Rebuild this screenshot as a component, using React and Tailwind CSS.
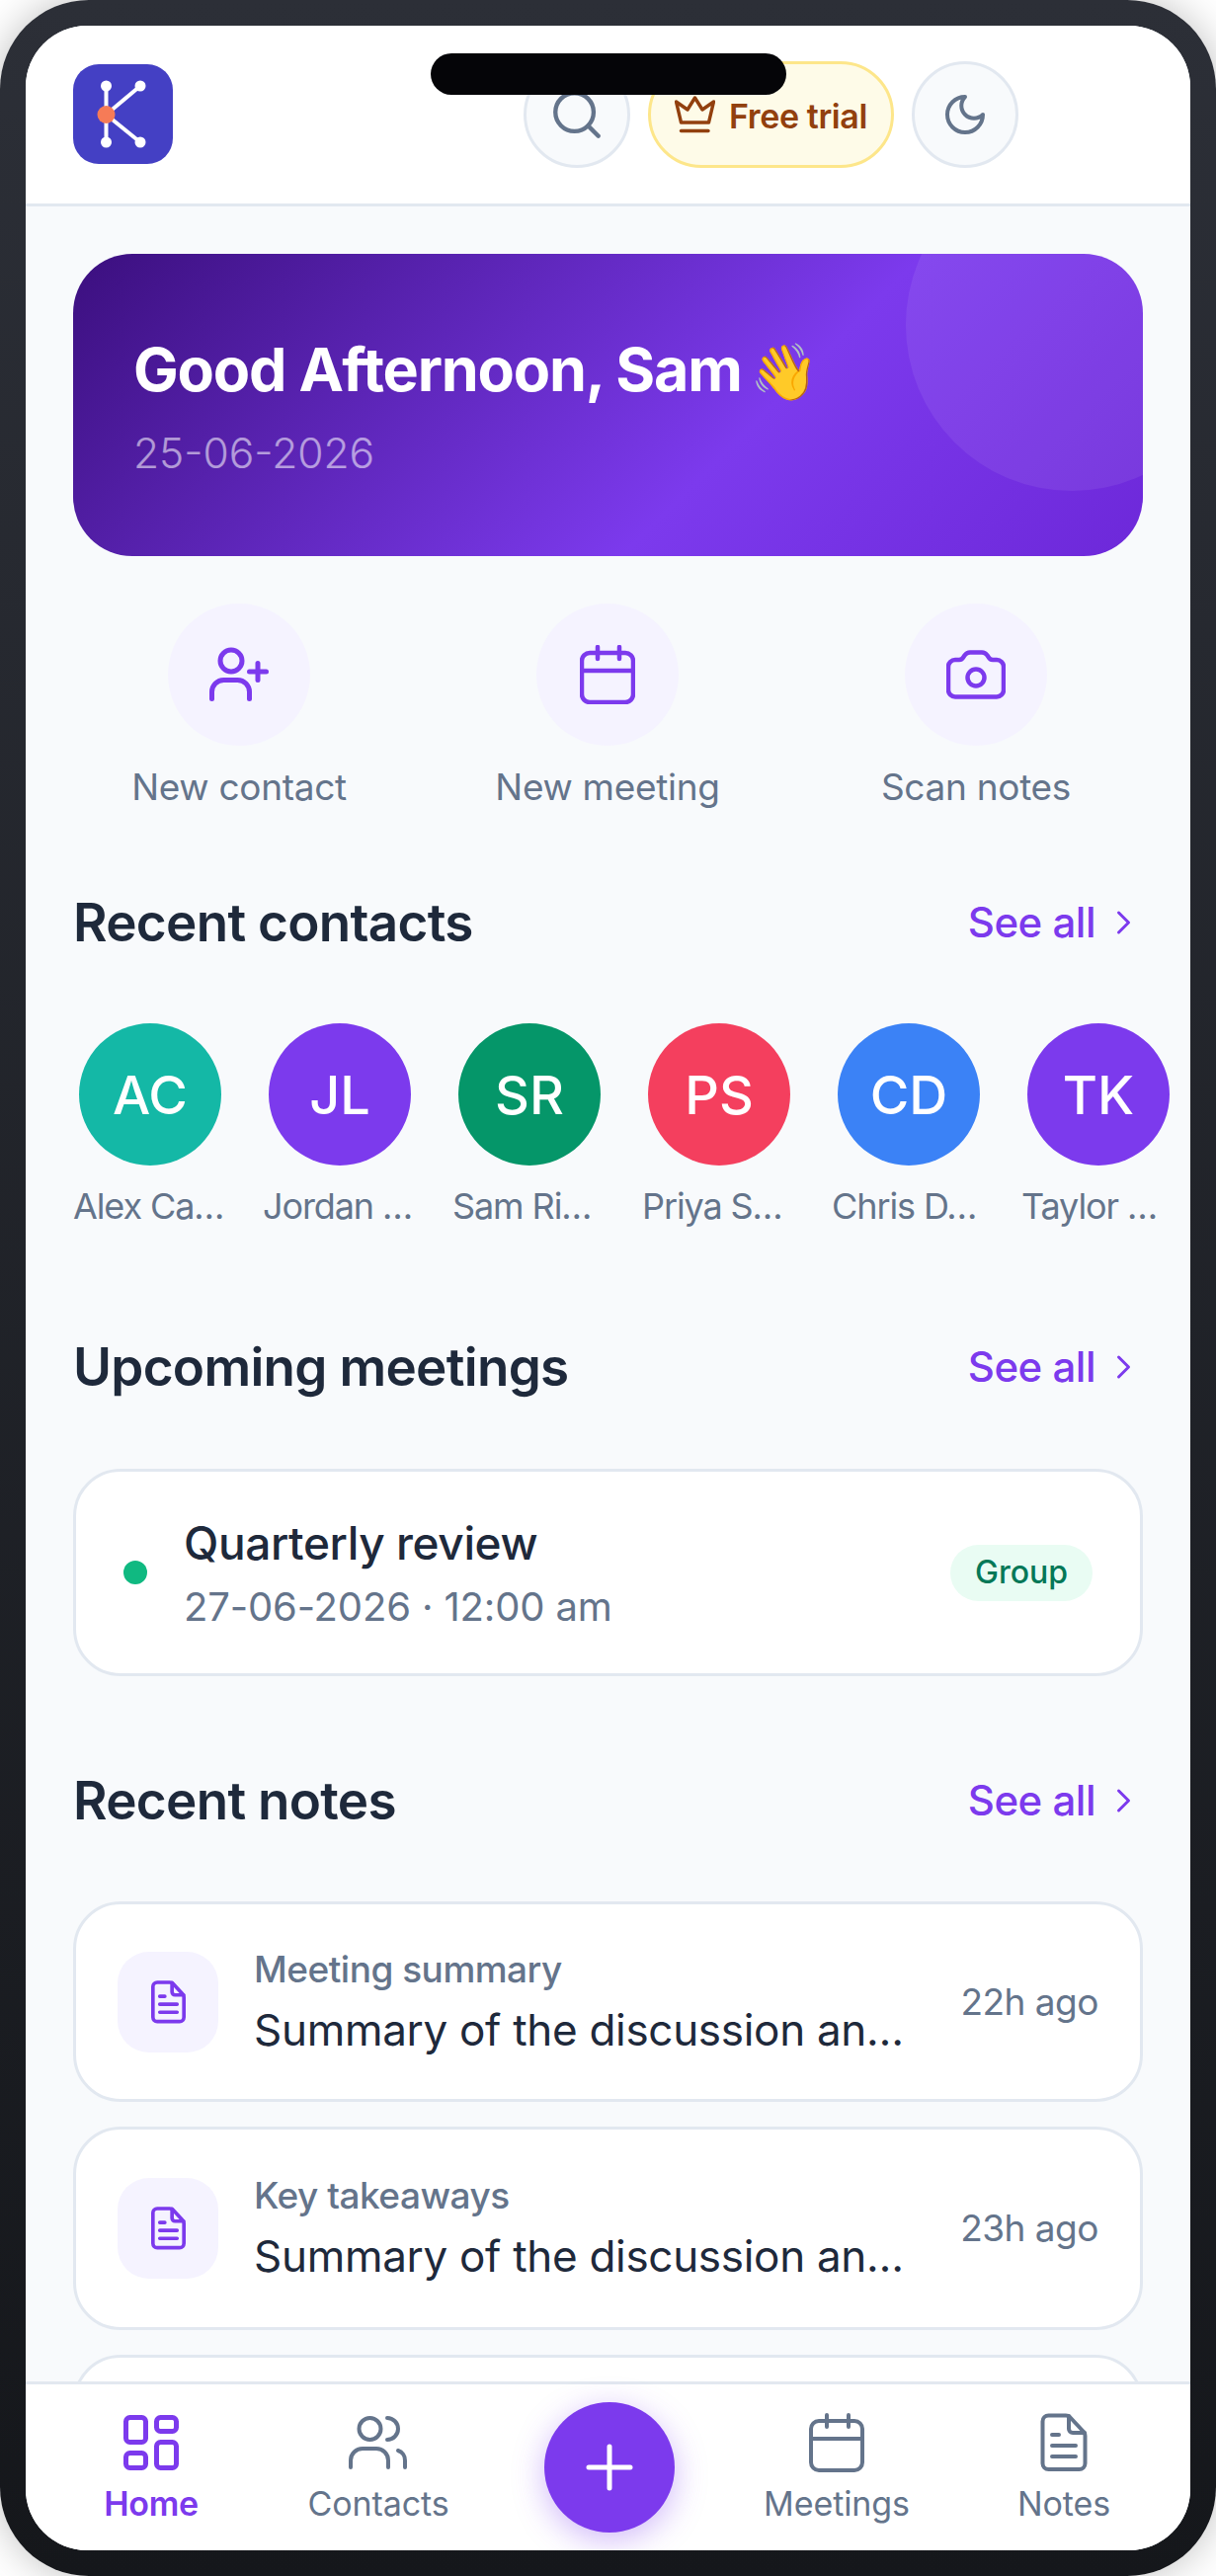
const SANS = 'font-["Inter",sans-serif]';

function Logo() {
  return (
    <div className="w-[101px] h-[101px] rounded-[26px] bg-[#4440c4] shrink-0 flex items-center justify-center">
      <svg width="101" height="101" viewBox="0 0 101 101">
        <g stroke="#fff" strokeWidth="4" fill="none">
          <path d="M33.5 22V79" />
          <path d="M33.5 51L68 22" />
          <path d="M33.5 51L68 79" />
        </g>
        <g fill="#fff">
          <circle cx="33.5" cy="22" r="5.5" />
          <circle cx="68" cy="22" r="5.5" />
          <circle cx="33.5" cy="79" r="5.5" />
          <circle cx="68" cy="79" r="5.5" />
        </g>
        <circle cx="33.5" cy="51" r="9" fill="#f67b57" />
      </svg>
    </div>
  );
}

function Icon({ w, h, color = '#7c3aed', sw = 4.5, children }) {
  return (
    <svg width={w} height={h} viewBox={`0 0 ${w} ${h}`} fill="none" stroke={color} strokeWidth={sw} strokeLinecap="round" strokeLinejoin="round">
      {children}
    </svg>
  );
}

const UserPlus = () => (
  <Icon w={60} h={56} sw={5}>
    <circle cx="22" cy="14" r="11" />
    <path d="M2.5 52.5v-7a12 12 0 0 1 12-12h14a12 12 0 0 1 12 12v7" />
    <path d="M49 16.5v17M40.5 25h17" />
  </Icon>
);
const Calendar = ({ color, sw }) => (
  <Icon w={56} h={60} color={color} sw={sw}>
    <rect x="2" y="8" width="52" height="50" rx="8" />
    <path d="M2 26H54M18 2V14M40 2V14" />
  </Icon>
);
const Camera = () => (
  <Icon w={60} h={50}>
    <path d="M9 10h4c2 0 3.5-1 4.5-3l1-1.500C20 3.500 22 2.500 24 2.500h12c2 0 4 1 5.500 3l1 1.500c1 2 2.500 3 4.500 3h4a7 7 0 0 1 7 7v23.500a7 7 0 0 1-7 7H9a7 7 0 0 1-7-7V17a7 7 0 0 1 7-7z" />
    <circle cx="30" cy="28" r="8.500" />
  </Icon>
);
// nav and note cards share the same page icon, the card one is just scaled down
function Doc({ color = '#7c3aed', sw = 4, width = 48, height = 60 }) {
  return (
    <svg width={width} height={height} viewBox="0 0 48 60" fill="none" stroke={color} strokeWidth={sw} strokeLinecap="round" strokeLinejoin="round">
      <path d="M8.500 2.500H26c2 0 3 .5 4 1.500L44 19c1 1 1.500 2 1.500 4v28a6 6 0 0 1-6 6h-31a6 6 0 0 1-6-6V8.500a6 6 0 0 1 6-6z" />
      <path d="M29 3v13a4 4 0 0 0 4 4h12" />
      <path d="M12 22h7M12 33h24M12 44h24" />
    </svg>
  );
}
const Dashboard = () => (
  <Icon w={56} h={56} sw={5}>
    <rect x="2.500" y="2.500" width="20" height="25" rx="4" />
    <rect x="33.500" y="2.500" width="20" height="14" rx="4" />
    <rect x="33.500" y="27.500" width="20" height="26" rx="4" />
    <rect x="2.500" y="38.500" width="20" height="15" rx="4" />
  </Icon>
);
const Users = () => (
  <Icon w={60} h={56} color="#64748b" sw={4}>
    <circle cx="21.500" cy="14" r="11" />
    <path d="M2 53v-7a12 12 0 0 1 12-12h14a12 12 0 0 1 12 12v7" />
    <path d="M39 3a11 11 0 0 1 0 22" />
    <path d="M50 36a10 10 0 0 1 7 10v7" />
  </Icon>
);

function SectionHead({ title, className = '' }) {
  return (
    <div className={`flex items-center justify-between pr-[11px] ${className}`}>
      <h2 className="text-[53px] leading-[64px] font-semibold text-[#1e293b] tracking-[-0.7px]">{title}</h2>
      <button className="flex items-center gap-[21px] text-[42px] leading-[56px] font-medium text-[#7c3aed] tracking-[-0.5px]">
        See all
        <svg width="16" height="26" viewBox="0 0 16 26" fill="none" stroke="#7c3aed" strokeWidth="3" strokeLinecap="round" strokeLinejoin="round">
          <path d="M2.500 3l10 10-10 10" />
        </svg>
      </button>
    </div>
  );
}

function QuickAction({ icon, label }) {
  return (
    <div className="w-[240px] flex flex-col items-center">
      <div className="w-[144px] h-[144px] rounded-full bg-[#f5f3ff] flex items-center justify-center">{icon}</div>
      <span className="mt-[18px] text-[37px] leading-[48px] text-[#64748b] tracking-[-0.3px] whitespace-nowrap">{label}</span>
    </div>
  );
}

function Contact({ initials, name, color }) {
  return (
    <div className="w-[156px] shrink-0 flex flex-col">
      <div className={`w-[144px] h-[144px] mx-auto rounded-full flex items-center justify-center text-white text-[54px] font-medium ${color}`}>{initials}</div>
      <span className="w-full mt-[17px] text-[36px] leading-[48px] text-[#64748b] whitespace-nowrap tracking-[-1.100px]">{name}</span>
    </div>
  );
}

function NoteCard({ title, time, h }) {
  return (
    <div className={`bg-white border-[3px] border-[#e2e8f0] rounded-[48px] flex items-center px-[42px] shrink-0 ${h}`}>
      <div className="w-[102px] h-[102px] rounded-[32px] bg-[#f5f3ff] flex items-center justify-center shrink-0">
        <Doc width={35} height={44} sw={5} />
      </div>
      <div className="ml-[36px] flex-1 min-w-0">
        <p className="text-[37px] leading-[46px] font-medium text-[#64748b] tracking-[-0.5px]">{title}</p>
        <p className="mt-[10px] text-[44px] leading-[56px] text-[#1e293b] whitespace-nowrap tracking-[-0.300px]">Summary of the discussion an…</p>
      </div>
      <span className="text-[37px] leading-[48px] text-[#64748b] whitespace-nowrap tracking-[-0.5px]">{time}</span>
    </div>
  );
}

function Tab({ icon, label, active, className = '' }) {
  return (
    <div className={`flex flex-col items-center ${className}`}>
      <div className="h-[60px] flex items-center">{icon}</div>
      <span className={`mt-[10px] text-[34px] leading-[44px] ${active ? 'font-semibold text-[#7c3aed] tracking-[-0.3px]' : 'text-[#64748b] tracking-[-0.1px]'}`}>{label}</span>
    </div>
  );
}

export default function App() {
  return (
    <div className={`w-[1231px] h-[2608px] bg-white ${SANS}`}>
      <div className="relative w-full h-full rounded-[90px] p-[26px] bg-gradient-to-b from-[#2c2f37] to-[#15171b] shadow-[0_0_40px_rgba(0,0,0,0.25)]">
        <div className="absolute top-[54px] left-[436px] w-[360px] h-[42px] rounded-full bg-[#050508] z-10" />

        <div className="w-full h-full rounded-[62px] overflow-hidden bg-[#f8fafc] flex flex-col">
          <header className="h-[183px] bg-white border-b-[3px] border-[#e2e8f0] flex items-start pt-[36px] pl-[48px] shrink-0">
            <div className="pt-[3px]"><Logo /></div>
            <div className="ml-[355px] flex gap-[18px]">
              <div className="w-[108px] h-[108px] rounded-full bg-[#f8fafc] border-[3px] border-[#e2e8f0] flex items-center justify-center">
                <svg width="58" height="58" viewBox="0 0 24 24" fill="none" stroke="#64748b" strokeWidth="1.800" strokeLinecap="round" strokeLinejoin="round">
                  <circle cx="11" cy="11" r="8" />
                  <path d="M21 21l-4.300-4.300" />
                </svg>
              </div>
              <div className="w-[249px] h-[108px] rounded-full bg-[#fefbe8] border-[3px] border-[#fde68a] flex items-center justify-center gap-[14px] text-[#92400e]">
                <Icon w={41} h={38} color="#92400e" sw={3.400}>
                  <path d="M1.500 6L6.500 27H34.500L39.500 6L28 14L20.500 2L13 14z" />
                  <path d="M6.500 35.500H34" />
                </Icon>
                <span className="mt-[3px] text-[34px] font-semibold tracking-[-0.4px]">Free trial</span>
              </div>
              <div className="w-[108px] h-[108px] rounded-full bg-[#f8fafc] border-[3px] border-[#e2e8f0] flex items-center justify-center">
                <svg width="48" height="48" viewBox="0 0 24 24" fill="none" stroke="#64748b" strokeWidth="2" strokeLinecap="round" strokeLinejoin="round">
                  <path d="M12 3a6 6 0 0 0 9 9 9 9 0 1 1-9-9z" />
                </svg>
              </div>
            </div>
          </header>

          <main className="flex-1 min-h-0 overflow-hidden px-[48px] pt-[48px] flex flex-col">
            <section className="relative h-[306px] shrink-0 rounded-[60px] overflow-hidden pl-[61px] pt-[80px] bg-[linear-gradient(135deg,#3b0f7e_0%,#7c3aed_62%,#6d28d9_100%)]">
              <div className="absolute -top-[96px] -right-[96px] w-[336px] h-[336px] rounded-full bg-white/[0.07]" />
              <h1 className="text-[61px] leading-[74px] font-bold text-white tracking-[-1.200px] whitespace-nowrap">Good Afternoon, Sam <span className="-ml-[5px] text-[56px]">👋</span></h1>
              <p className="mt-[20px] text-[42.500px] leading-[52px] font-light text-white/55">25-06-2026</p>
            </section>

            <div className="mt-[48px] flex justify-between pl-[48px] pr-[49px] shrink-0">
              <QuickAction icon={<UserPlus />} label="New contact" />
              <QuickAction icon={<Calendar />} label="New meeting" />
              <QuickAction icon={<Camera />} label="Scan notes" />
            </div>

            <SectionHead title="Recent contacts" className="mt-[81px] shrink-0" />

            <div className="mt-[70px] flex gap-[36px] shrink-0">
              <Contact initials="AC" name="Alex Ca…" color="bg-[#14b8a6]" />
              <Contact initials="JL" name="Jordan …" color="bg-[#7c3aed]" />
              <Contact initials="SR" name="Sam Ri…" color="bg-[#059669]" />
              <Contact initials="PS" name="Priya S…" color="bg-[#f43f5e]" />
              <Contact initials="CD" name="Chris D…" color="bg-[#3b82f6]" />
              <Contact initials="TK" name="Taylor …" color="bg-[#7c3aed]" />
            </div>

            <SectionHead title="Upcoming meetings" className="mt-[107px] shrink-0" />

            <div className="mt-[71px] h-[210px] shrink-0 bg-white border-[3px] border-[#e2e8f0] rounded-[48px] flex items-center px-[48px]">
              <span className="w-[24px] h-[24px] rounded-full bg-[#10b981] shrink-0" />
              <div className="ml-[37px] flex-1">
                <p className="text-[46px] leading-[60px] font-medium text-[#1e293b] tracking-[-0.400px]">Quarterly review</p>
                <p className="mt-[9px] text-[40px] leading-[52px] text-[#64748b] tracking-[-0.150px]">27-06-2026 · 12:00 am</p>
              </div>
              <span className="w-[144px] h-[57px] rounded-full bg-[#e9fcf3] flex items-center justify-center text-[32px] font-medium text-[#047857]">Group</span>
            </div>

            <SectionHead title="Recent notes" className="mt-[94px] shrink-0" />

            <div className="mt-[70px] flex flex-col gap-[25px]">
              <NoteCard title="Meeting summary" time="22h ago" h="h-[203px]" />
              <NoteCard title="Key takeaways" time="23h ago" h="h-[206px]" />
              <div className="h-[204px] shrink-0 bg-white border-[3px] border-[#e2e8f0] rounded-[48px]" />
            </div>
          </main>

          <nav className="relative z-10 h-[171px] shrink-0 bg-white border-t-[3px] border-[#e2e8f0] flex items-start pt-[29px] pl-[12px]">
            <Tab className="w-[230px]" active icon={<Dashboard />} label="Home" />
            <Tab className="w-[230px]" icon={<Users />} label="Contacts" />
            <div className="w-[238px] flex justify-center shrink-0">
              <div className="w-[132px] h-[132px] -mt-[11px] rounded-full bg-[#7c3aed] shadow-[0_8px_32px_rgba(124,58,237,0.35)] flex items-center justify-center">
                <svg width="52" height="52" viewBox="0 0 52 52" stroke="#fff" strokeWidth="5" strokeLinecap="round"><path d="M26 5v42M5 26h42" /></svg>
              </div>
            </div>
            <Tab className="w-[222px]" icon={<Calendar color="#64748b" sw={4} />} label="Meetings" />
            <Tab className="w-[238px]" icon={<Doc color="#64748b" />} label="Notes" />
          </nav>
        </div>
      </div>
    </div>
  );
}
